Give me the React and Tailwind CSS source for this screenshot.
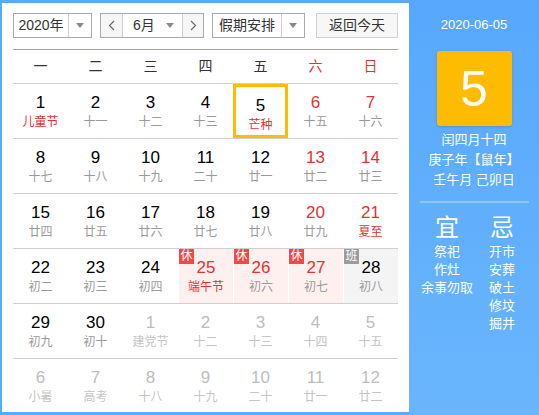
import React from 'react';

const FONT = { fontFamily: '"Liberation Sans", "Noto Sans CJK SC", sans-serif' };

// [day, lunar, flags]  flags: r = red number, f = festival (red lunar), o = other month, t = today, x = 休, b = 班
const ROWS = [
  [[1, '儿童节', 'f'], [2, '十一'], [3, '十二'], [4, '十三'], [5, '芒种', 'ft'], [6, '十五', 'r'], [7, '十六', 'r']],
  [[8, '十七'], [9, '十八'], [10, '十九'], [11, '二十'], [12, '廿一'], [13, '廿二', 'r'], [14, '廿三', 'r']],
  [[15, '廿四'], [16, '廿五'], [17, '廿六'], [18, '廿七'], [19, '廿八'], [20, '廿九', 'r'], [21, '夏至', 'rf']],
  [[22, '初二'], [23, '初三'], [24, '初四'], [25, '端午节', 'rfx'], [26, '初六', 'rx'], [27, '初七', 'rx'], [28, '初八', 'b']],
  [[29, '初九'], [30, '初十'], [1, '建党节', 'o'], [2, '十二', 'o'], [3, '十三', 'o'], [4, '十四', 'o'], [5, '十五', 'o']],
  [[6, '小暑', 'o'], [7, '高考', 'o'], [8, '十八', 'o'], [9, '十九', 'o'], [10, '二十', 'o'], [11, '廿一', 'o'], [12, '廿二', 'o']],
];

const WEEK = ['一', '二', '三', '四', '五', '六', '日'];

const Caret = () => (
  <svg width="8" height="5" viewBox="0 0 8 5"><path d="M0 0h8L4 5z" fill="#8a8a8a" /></svg>
);

const Chevron = ({ dir }) => (
  <svg width="7" height="11" viewBox="0 0 7 11">
    <path d={dir === 'l' ? 'M6 1L1.5 5.5 6 10' : 'M1 1l4.5 4.5L1 10'} fill="none" stroke="#6b6b6b" strokeWidth="1.2" />
  </svg>
);

function Cell({ d }) {
  const [day, lunar, flags = ''] = d;
  const other = flags.includes('o');
  const today = flags.includes('t');
  const rest = flags.includes('x');
  const work = flags.includes('b');
  let bg = '';
  if (rest) bg = 'bg-[#fff0f0] border-l border-white';
  if (work) bg = 'bg-[#f4f4f4] border-l border-white';
  const numColor = other ? 'text-[#bdbdbd]' : flags.includes('r') ? 'text-[#e8312f]' : 'text-black';
  const lunarColor = other ? 'text-[#c4c4c4]' : flags.includes('f') ? 'text-[#e8312f]' : 'text-[#9a9a9a]';
  return (
    <div className={`relative h-[54px] flex flex-col items-center pt-[9px] ${bg} ${today ? 'border-[3px] border-[#ffbb00] pt-[6px]' : ''}`}>
      {rest && (
        <span className="absolute top-0 left-0 w-[15px] h-[15px] bg-[#f04a47] text-white text-[12px] leading-[15px] text-center">休</span>
      )}
      {work && (
        <span className="absolute top-0 left-0 w-[15px] h-[15px] bg-[#9b9b9b] text-white text-[12px] leading-[15px] text-center">班</span>
      )}
      <span className={`text-[17px] leading-[20px] ${numColor}`}>{day}</span>
      <span className={`text-[12px] leading-[17px] mt-[1px] ${lunarColor}`}>{lunar}</span>
    </div>
  );
}

export default function App() {
  return (
    <div className="w-[539px] h-[415px] flex bg-[#5aaaf9]" style={FONT}>
      <div className="w-[407px] h-[409px] mt-[3px] ml-[2px] bg-white px-[11px]">
        <div className="flex items-center h-[25px] mt-[10px] text-[14px] text-[#333]">
          <div className="w-[79px] h-[25px] border border-[#a9a9a9] flex">
            <div className="w-[55px] flex items-center justify-center border-r border-[#cfcfcf]">2020年</div>
            <div className="flex-1 flex items-center justify-center"><Caret /></div>
          </div>
          <div className="w-[104px] h-[25px] ml-[8px] border border-[#a9a9a9] flex">
            <div className="w-[22px] bg-[#f6f6f6] flex items-center justify-center border-r border-[#cfcfcf]"><Chevron dir="l" /></div>
            <div className="w-[60px] flex items-center justify-between pl-[10px] pr-[8px] border-r border-[#cfcfcf]">
              <span>6月</span>
              <Caret />
            </div>
            <div className="flex-1 bg-[#f6f6f6] flex items-center justify-center"><Chevron dir="r" /></div>
          </div>
          <div className="w-[93px] h-[25px] ml-[8px] border border-[#a9a9a9] flex">
            <div className="w-[69px] flex items-center justify-center border-r border-[#cfcfcf]">假期安排</div>
            <div className="flex-1 flex items-center justify-center"><Caret /></div>
          </div>
          <div className="w-[82px] h-[25px] ml-[11px] border border-[#d2d2d2] bg-[#f7f7f7] flex items-center justify-center">返回今天</div>
        </div>
        <div className="h-px bg-[#6db2f9] mt-[11px]" />
        <div className="grid grid-cols-7 h-[33px] items-center text-[14px]">
          {WEEK.map((w, i) => (
            <div key={w} className={`text-center ${i >= 5 ? 'text-[#e8312f]' : 'text-[#333]'}`}>{w}</div>
          ))}
        </div>
        {ROWS.map((row, ri) => (
          <div key={ri} className="grid grid-cols-7 border-t border-[#cfcfcf]">
            {row.map((d, ci) => <Cell key={ci} d={d} />)}
          </div>
        ))}
      </div>
      <div className="flex-1 bg-gradient-to-b from-[#57a8fd] to-[#6ab5fc] text-white flex flex-col items-center">
        <div className="text-[13px] leading-[16px] mt-[17px]">2020-06-05</div>
        <div className="w-[75px] h-[75px] mt-[18px] rounded-[3px] bg-[#ffbb00] shadow-[0_1px_3px_rgba(0,0,0,0.15)] flex items-center justify-center text-[50px] leading-none">5</div>
        <div className="mt-[4px] text-[13px] leading-[20px] text-center">
          <div>闰四月十四</div>
          <div>庚子年【鼠年】</div>
          <div>壬午月 己卯日</div>
        </div>
        <div className="w-[109px] h-[2px] bg-[#8ec5fb] mt-[11px]" />
        <div className="flex w-[110px] mt-[10px]">
          <div className="w-[56px] flex flex-col items-center">
            <div className="text-[24px] leading-[30px]">宜</div>
            <div className="text-[13px] leading-[18px] text-center">
              <div>祭祀</div>
              <div>作灶</div>
              <div>余事勿取</div>
            </div>
          </div>
          <div className="w-[54px] flex flex-col items-center">
            <div className="text-[24px] leading-[30px]">忌</div>
            <div className="text-[13px] leading-[18px] text-center">
              <div>开市</div>
              <div>安葬</div>
              <div>破土</div>
              <div>修坟</div>
              <div>掘井</div>
            </div>
          </div>
        </div>
      </div>
    </div>
  );
}
